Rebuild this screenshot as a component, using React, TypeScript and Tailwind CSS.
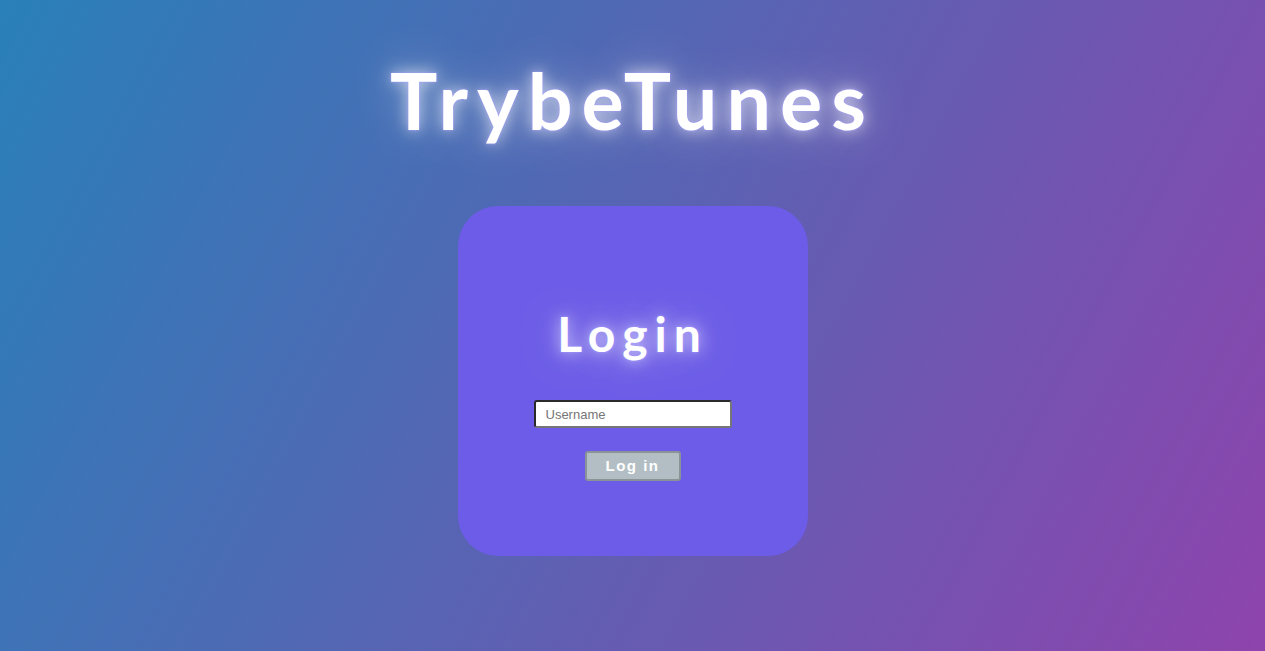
import React from "react";

export default function App() {
  return (
    <div className="min-h-screen w-full bg-[linear-gradient(118deg,#2980b9,#8e44ad)] flex flex-col items-center font-['Lato',sans-serif]">
      <h1 className="mt-[40px] text-[79px] leading-[120px] font-bold text-white tracking-[9px] [text-shadow:0_0_3px_#a29bfe,0_0_16px_rgba(255,255,255,0.75),0_0_45px_rgba(255,255,255,0.5)]">
        TrybeTunes
      </h1>
      <div className="mt-[46px] w-[350px] h-[350px] rounded-[40px] bg-[#6c5ce7] flex flex-col items-center">
        <h2 className="mt-[96px] text-[48px] leading-[64px] font-bold text-white tracking-[7px] [text-shadow:0_0_3px_#a29bfe,0_0_16px_rgba(255,255,255,0.75),0_0_45px_rgba(255,255,255,0.5)]">
          Login
        </h2>
        <input
          placeholder="Username"
          className="mt-[34px] w-[198px] h-[28px] bg-white rounded-[3px] border-2 border-t-[#2a2a2a] border-l-[#2a2a2a] border-b-[#767676] border-r-[#767676] px-[10px] text-[13px] text-black placeholder:text-[#757575] outline-none font-['Liberation_Sans',Arial,sans-serif]"
        />
        <button className="mt-[23px] w-[96px] h-[30px] bg-[#b2bec3] rounded-[3px] border-2 border-[#8a9396] text-white font-bold text-[15px] tracking-[1.5px] font-['Liberation_Sans',Arial,sans-serif]">
          Log in
        </button>
      </div>
    </div>
  );
}
